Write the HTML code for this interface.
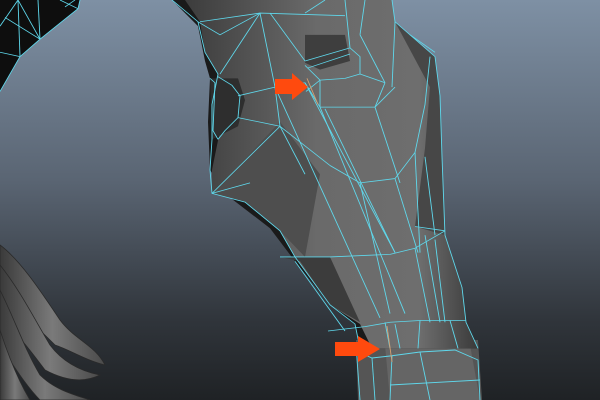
<!DOCTYPE html>
<html><head><style>html,body{margin:0;padding:0;width:600px;height:400px;overflow:hidden}</style></head>
<body>
<svg width="600" height="400" viewBox="0 0 600 400" xmlns="http://www.w3.org/2000/svg">
<defs>
<linearGradient id="bg" x1="0" y1="0" x2="0" y2="1">
<stop offset="0" stop-color="#7e90a4"/><stop offset="0.45" stop-color="#5a6573"/><stop offset="0.8" stop-color="#30353b"/><stop offset="1" stop-color="#1f2225"/>
</linearGradient>
<linearGradient id="face" x1="0" y1="0" x2="1" y2="0">
<stop offset="0" stop-color="#3c3c3c"/><stop offset="0.45" stop-color="#6a6a6a"/><stop offset="0.8" stop-color="#6e6e6e"/><stop offset="1" stop-color="#3a3a3a"/>
</linearGradient>
<linearGradient id="hair" x1="0" y1="0" x2="1" y2="0">
<stop offset="0" stop-color="#3a3a3a"/><stop offset="0.5" stop-color="#7a7a7a"/><stop offset="1" stop-color="#4a4a4a"/>
</linearGradient>
</defs>
<rect width="600" height="400" fill="url(#bg)"/>
<g transform="scale(1,0.871)">
<polygon points="0,0 80,0 78,10 40,45 20,65 0,105" fill="#0e0e0e"/>
<g stroke="#5fd8ec" stroke-width="0.9" fill="none" vector-effect="non-scaling-stroke">
<polyline points="0,105 20,65 40,45 78,10 80,0"/>
<line x1="18" y1="0" x2="0" y2="30"/><line x1="18" y1="0" x2="40" y2="45"/><line x1="18" y1="0" x2="20" y2="65"/>
<line x1="38" y1="0" x2="40" y2="45"/><line x1="60" y1="0" x2="78" y2="10"/><line x1="0" y1="60" x2="20" y2="65"/>
<line x1="5" y1="20" x2="40" y2="45"/><line x1="65" y1="8" x2="75" y2="0"/>
</g>
</g>
<g fill="url(#hair)" stroke="#2a2a2a" stroke-width="0.8">
<path d="M0,245 C20,260 40,290 60,320 C75,340 95,345 105,365 C85,360 70,350 55,345 C40,330 20,310 0,300Z"/>
<path d="M0,265 C20,290 35,320 50,345 C65,365 85,372 100,375 C80,385 60,378 45,370 C30,350 15,330 0,320Z"/>
<path d="M0,290 C15,320 25,350 40,375 C55,390 75,395 90,400 L40,400 C25,385 10,360 0,345Z"/>
<path d="M0,330 C8,355 18,380 30,400 L0,400Z"/>
</g>
<!-- bottom block -->
<polygon points="356,340 478,340 482,400 358,400" fill="#555"/>
<polygon points="385,345 470,345 480,400 390,400" fill="#656565"/>
<g stroke="#5fd8ec" stroke-width="0.9" fill="none">
<polyline points="356,345 360,400"/>
<polyline points="358,352 372,358 390,356 420,352 455,350 478,360 480,400"/>
<line x1="392" y1="356" x2="390" y2="400"/>
<line x1="420" y1="352" x2="430" y2="400"/>
<line x1="372" y1="358" x2="375" y2="400"/>
<line x1="390" y1="385" x2="480" y2="380"/>
</g>
<g transform="scale(1,0.871)">
<polygon points="172,0 392,0 395,25 435,65 440,110 442,180 445,270 462,330 466,370 478,400 360,400 355,372 330,350 295,300 270,262 228,225 210,195 208,140 210,90 205,70 198,30" fill="#1a1a1a"/>
<polygon points="185,0 392,0 395,25 435,65 440,110 442,180 445,270 462,330 466,370 478,400 372,400 360,372 330,350 295,295 280,265 245,232 212,222 212,195 220,150 212,120 218,85 205,60 200,25" fill="url(#face)"/>
<polygon points="212,222 280,140 320,200 305,295 280,265 245,232" fill="#4e4e4e"/>
<polygon points="280,295 330,295 360,370 330,350 300,300" fill="#3c3c3c"/>
<polygon points="395,25 435,65 440,110 442,180 445,270 415,260 425,170 430,100" fill="#474747"/>
<polygon points="305,40 345,40 350,70 320,80 305,72" fill="#3e3e3e"/>
<polygon points="210,90 238,90 245,115 238,145 212,160" fill="#2e2e2e"/>
<g stroke="#5fd8ec" stroke-width="0.9" fill="none" stroke-linejoin="round">
<polyline points="172,0 198,25 205,60 218,85 212,120 212,160 210,195 212,222 245,232 280,265 295,295 330,350 355,372 360,400"/>
<polyline points="392,0 395,25 435,65 440,110 442,180 445,270 462,330 466,370 478,400"/>
<polyline points="200,25 260,15 345,18"/>
<polyline points="198,25 220,40 260,15"/>
<line x1="260" y1="15" x2="275" y2="100"/><line x1="260" y1="15" x2="220" y2="85"/>
<line x1="270" y1="15" x2="305" y2="70"/>
<polyline points="305,70 350,55 360,65 360,85 345,90 320,92 305,75"/>
<polyline points="308,78 350,62"/>
<line x1="345" y1="0" x2="350" y2="55"/><line x1="325" y1="0" x2="305" y2="15"/>
<line x1="365" y1="0" x2="360" y2="40"/>
<line x1="395" y1="25" x2="392" y2="100"/><line x1="360" y1="40" x2="385" y2="95"/>
<line x1="360" y1="85" x2="385" y2="95"/>
<line x1="320" y1="92" x2="320" y2="123"/><line x1="320" y1="92" x2="306" y2="105"/>
<polyline points="238,110 275,100 305,95 320,123 375,123 385,95"/>
<line x1="375" y1="123" x2="395" y2="100"/>
<polyline points="218,88 232,98 240,110 238,135 225,150 218,160"/>
<polyline points="210,90 215,95 213,150 218,160"/>
<polyline points="238,135 280,145 305,200"/>
<line x1="280" y1="145" x2="212" y2="222"/>
<line x1="280" y1="145" x2="275" y2="100"/>
<line x1="280" y1="145" x2="330" y2="190"/>
<polyline points="330,190 360,210 395,205 415,175 425,120 430,65"/>
<line x1="305" y1="95" x2="395" y2="290"/>
<line x1="275" y1="100" x2="380" y2="365"/>
<line x1="320" y1="123" x2="405" y2="360"/>
<line x1="325" y1="125" x2="395" y2="290"/>
<line x1="360" y1="210" x2="390" y2="360"/>
<line x1="375" y1="123" x2="400" y2="210"/>
<line x1="395" y1="205" x2="418" y2="290"/>
<line x1="415" y1="175" x2="420" y2="290"/>
<line x1="425" y1="180" x2="435" y2="270"/>
<line x1="415" y1="260" x2="445" y2="265"/>
<line x1="212" y1="222" x2="250" y2="210"/>
<path d="M280,295 L330,295 L390,292 L415,285 L445,265"/>
<line x1="295" y1="300" x2="345" y2="380"/>
<line x1="415" y1="285" x2="430" y2="370"/>
<line x1="435" y1="275" x2="445" y2="370"/>
<line x1="425" y1="270" x2="440" y2="370"/>
<polyline points="328,380 365,375 390,370 420,368 466,368"/>
<line x1="385" y1="370" x2="390" y2="400"/>
<line x1="395" y1="372" x2="400" y2="400"/>
<line x1="420" y1="368" x2="418" y2="400"/>
<line x1="450" y1="368" x2="458" y2="400"/>
<line x1="435" y1="60" x2="410" y2="40"/>
</g>
<line x1="307" y1="90" x2="318" y2="120" stroke="#d8a070" stroke-width="0.9"/>
</g>
<line x1="387" y1="326" x2="392" y2="362" stroke="#d8a070" stroke-width="0.9"/>
<polygon points="275,79 292,79 292,73 308,87 292,100 292,94 275,94" fill="#ff4a0e"/>
<polygon points="335,342 358,342 358,336 380,349 358,362 358,356 335,356" fill="#ff4a0e"/>
</svg>
</body></html>
